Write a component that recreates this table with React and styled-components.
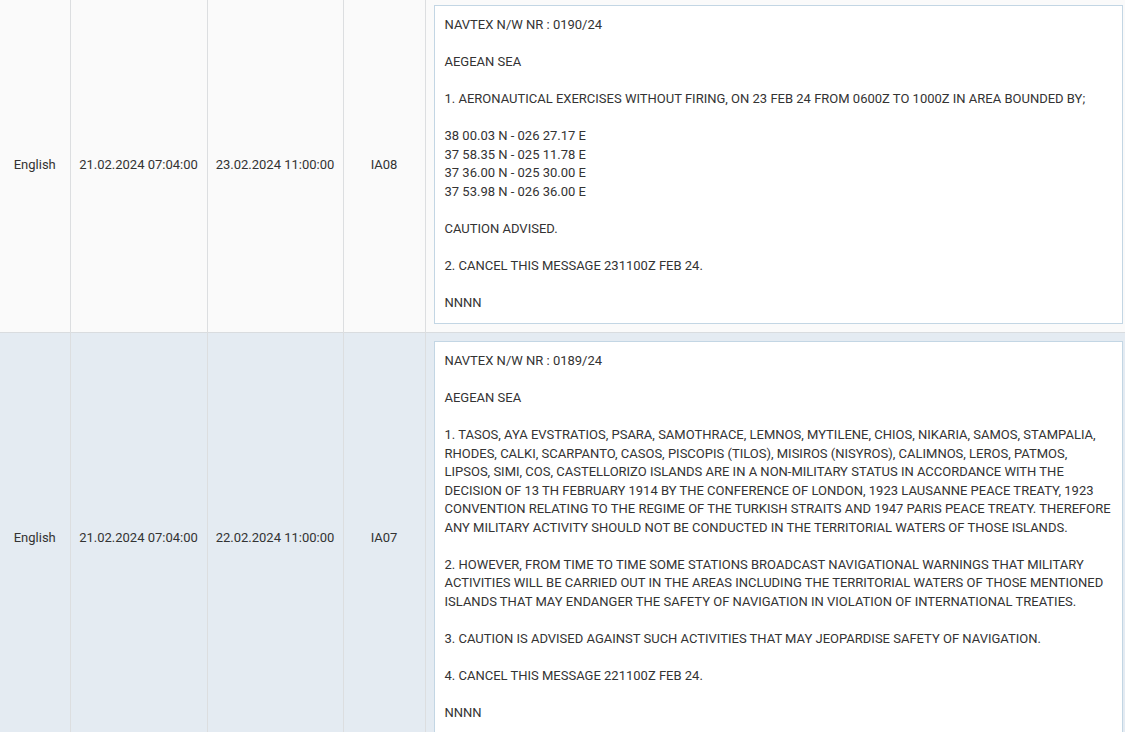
import React from 'react'
import styled, { createGlobalStyle } from 'styled-components'

const GlobalStyle = createGlobalStyle`
  html, body {
    margin: 0;
    padding: 0;
    overflow: hidden;
    background: #fafafa;
  }
  body {
    font-family: Roboto, 'Liberation Sans', Arial, sans-serif;
    color: #333;
  }
`

const messages = [
  {
    lang: 'English',
    start: '21.02.2024 07:04:00',
    end: '23.02.2024 11:00:00',
    code: 'IA08',
    text: `NAVTEX N/W NR : 0190/24

AEGEAN SEA

1. AERONAUTICAL EXERCISES WITHOUT FIRING, ON 23 FEB 24 FROM 0600Z TO 1000Z IN AREA BOUNDED BY;

38 00.03 N - 026 27.17 E
37 58.35 N - 025 11.78 E
37 36.00 N - 025 30.00 E
37 53.98 N - 026 36.00 E

CAUTION ADVISED.

2. CANCEL THIS MESSAGE 231100Z FEB 24.

NNNN`,
  },
  {
    lang: 'English',
    start: '21.02.2024 07:04:00',
    end: '22.02.2024 11:00:00',
    code: 'IA07',
    text: `NAVTEX N/W NR : 0189/24

AEGEAN SEA

1. TASOS, AYA EVSTRATIOS, PSARA, SAMOTHRACE, LEMNOS, MYTILENE, CHIOS, NIKARIA, SAMOS, STAMPALIA,
RHODES, CALKI, SCARPANTO, CASOS, PISCOPIS (TILOS), MISIROS (NISYROS), CALIMNOS, LEROS, PATMOS,
LIPSOS, SIMI, COS, CASTELLORIZO ISLANDS ARE IN A NON-MILITARY STATUS IN ACCORDANCE WITH THE
DECISION OF 13 TH FEBRUARY 1914 BY THE CONFERENCE OF LONDON, 1923 LAUSANNE PEACE TREATY, 1923
CONVENTION RELATING TO THE REGIME OF THE TURKISH STRAITS AND 1947 PARIS PEACE TREATY. THEREFORE
ANY MILITARY ACTIVITY SHOULD NOT BE CONDUCTED IN THE TERRITORIAL WATERS OF THOSE ISLANDS.

2. HOWEVER, FROM TIME TO TIME SOME STATIONS BROADCAST NAVIGATIONAL WARNINGS THAT MILITARY
ACTIVITIES WILL BE CARRIED OUT IN THE AREAS INCLUDING THE TERRITORIAL WATERS OF THOSE MENTIONED
ISLANDS THAT MAY ENDANGER THE SAFETY OF NAVIGATION IN VIOLATION OF INTERNATIONAL TREATIES.

3. CAUTION IS ADVISED AGAINST SUCH ACTIVITIES THAT MAY JEOPARDISE SAFETY OF NAVIGATION.

4. CANCEL THIS MESSAGE 221100Z FEB 24.

NNNN`,
  },
]

const App = () => {
  return (
    <>
      <GlobalStyle />
      <Table>
        <colgroup>
          <col style={{ width: 70 }} />
          <col style={{ width: 137 }} />
          <col style={{ width: 136 }} />
          <col style={{ width: 82 }} />
          <col />
        </colgroup>
        <tbody>
          {messages.map((m, i) => (
            <Row key={m.code} $alt={i % 2 === 1}>
              <Cell>{m.lang}</Cell>
              <Cell>{m.start}</Cell>
              <Cell>{m.end}</Cell>
              <Cell>{m.code}</Cell>
              <TextCell>
                <MessageBox>{m.text}</MessageBox>
              </TextCell>
            </Row>
          ))}
        </tbody>
      </Table>
    </>
  )
}

const Table = styled.table`
  width: 1131px;
  border-collapse: collapse;
  table-layout: fixed;
  font-size: 13px;
`

const Row = styled.tr`
  background: ${(p) => (p.$alt ? '#e4ebf2' : '#fafafa')};
  border-top: 1px solid #d9dcdf;
  &:first-child {
    border-top: none;
  }
  &:first-child td {
    padding-top: 5px;
  }
`

const Cell = styled.td`
  border-left: 1px solid #dcdee0;
  padding: 8px 4px;
  text-align: center;
  vertical-align: middle;
  white-space: nowrap;
  color: #333;
  &:first-child {
    border-left: none;
  }
`

const TextCell = styled.td`
  border-left: 1px solid #dcdee0;
  padding: 8px;
  vertical-align: middle;
`

const MessageBox = styled.div`
  background: #fff;
  border: 1px solid #c3d6e4;
  padding: 10px 10px 11px 10px;
  white-space: pre-wrap;
  line-height: 18.5px;
  color: #333;
  font-size: 13px;
`

export default App
